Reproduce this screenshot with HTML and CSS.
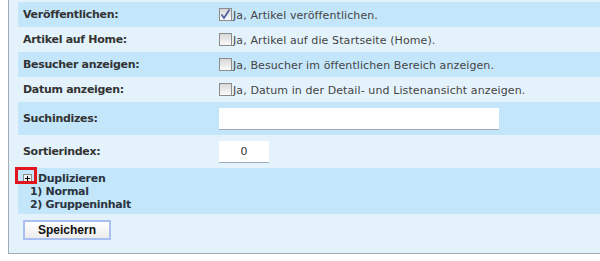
FILE: index.html
```html
<!DOCTYPE html>
<html>
<head>
    <title>Artikel</title>
    <meta charset="utf-8">
    <link rel="stylesheet" href="styles.css">
</head>
<body>
    <div class="form-box">
        <table class="form">
            <tr class="dark">
                <td class="label">Veröffentlichen:</td>
                <td class="value"><span class="check checked"><svg width="11" height="11" viewBox="0 0 11 11"><path d="M1.5 5.5 L4 9 L9.5 0.5" fill="none" stroke="#4a5aa0" stroke-width="1.6"/></svg></span>Ja, Artikel veröffentlichen.</td>
            </tr>
            <tr class="light">
                <td class="label">Artikel auf Home:</td>
                <td class="value"><span class="check"></span>Ja, Artikel auf die Startseite (Home).</td>
            </tr>
            <tr class="dark">
                <td class="label">Besucher anzeigen:</td>
                <td class="value"><span class="check"></span>Ja, Besucher im öffentlichen Bereich anzeigen.</td>
            </tr>
            <tr class="light">
                <td class="label">Datum anzeigen:</td>
                <td class="value"><span class="check"></span>Ja, Datum in der Detail- und Listenansicht anzeigen.</td>
            </tr>
            <tr class="dark tall">
                <td class="label">Suchindizes:</td>
                <td class="value"><input class="field wide" type="text" value=""></td>
            </tr>
            <tr class="light tall">
                <td class="label">Sortierindex:</td>
                <td class="value"><input class="field small" type="text" value="0"></td>
            </tr>
            <tr class="dark dup">
                <td colspan="2">
                    <div class="dup-box">
                        <div class="dup-title">
                            <svg class="plus" width="9" height="9" viewBox="0 0 9 9"><rect x="0.5" y="0.5" width="8" height="8" fill="#f0f0f0" stroke="#8a8a8a"/><path d="M2 4.5 H7 M4.5 2 V7" stroke="#000" stroke-width="1"/></svg>
                            <span>Duplizieren</span>
                        </div>
                        <div class="dup-item">1) Normal</div>
                        <div class="dup-item">2) Gruppeninhalt</div>
                        <span class="mark"></span>
                    </div>
                </td>
            </tr>
            <tr class="buttons">
                <td colspan="2"><button class="save" type="button">Speichern</button></td>
            </tr>
        </table>
    </div>
</body>
</html>
```

FILE: styles.css
```css
body {
    margin: 0;
    background-color: #fff;
    overflow: hidden;
    font-family: "DejaVu Sans", Verdana, sans-serif;
    font-size: 11px;
    color: #333;
}

.form-box {
    margin-left: 8px;
    padding: 2px 0 0 9px;
    background-color: #e4f3fb;
    border-left: 1px solid #a3adb5;
    border-bottom: 1px solid #a3adb5;
}

.form {
    width: 100%;
    border-collapse: collapse;
}
.form td {
    padding: 0;
}

.dark {
    background-color: #c4e6fa;
}
.light {
    background-color: #e4f3fb;
}

.form tr {
    height: 25px;
}
.form tr.tall {
    height: 33px;
}

.label {
    width: 195px;
    padding-left: 5px !important;
    font-weight: bold;
    letter-spacing: -0.3px;
    color: #333;
}
.value {
    padding-left: 1px !important;
    letter-spacing: 0.1px;
    color: #444;
}

.check {
    display: inline-block;
    width: 11px;
    height: 11px;
    border: 1px solid #8c8c8c;
    background: linear-gradient(#d8d8d8, #fafafa);
    vertical-align: -2px;
    margin-right: 1px;
}
.check svg {
    display: block;
}

.field {
    display: block;
    box-sizing: border-box;
    height: 22px;
    border: 0;
    border-bottom: 1px solid #9aabbf;
    background-color: #fff;
    font-family: "DejaVu Sans", Verdana, sans-serif;
    font-size: 11px;
    color: #333;
    padding: 0 3px;
    outline: none;
}
.wide {
    width: 280px;
}
.small {
    width: 50px;
    text-align: center;
}

.dup {
    height: 46px;
}
.dup-box {
    position: relative;
    padding: 4px 0 3px 5px;
    font-weight: bold;
    letter-spacing: -0.3px;
    line-height: 13px;
    color: #2a3440;
}
.dup-title {
    display: flex;
    align-items: center;
}
.plus {
    display: block;
    margin-right: 6px;
    flex: none;
}
.dup-item {
    padding-left: 7px;
}
.mark {
    position: absolute;
    left: -3px;
    top: -1px;
    width: 16px;
    height: 11px;
    border: 3px solid #e2151f;
}

.buttons td {
    height: 39px;
    padding: 0 0 0 5px;
    vertical-align: top;
}
.save {
    display: block;
    margin-top: 6px;
    width: 88px;
    height: 20px;
    border: 2px solid #abc0f2;
    background: linear-gradient(#ffffff, #ececec);
    font-family: "Liberation Sans", Arial, sans-serif;
    font-size: 12px;
    font-weight: bold;
    color: #111;
    padding: 0;
}
```
